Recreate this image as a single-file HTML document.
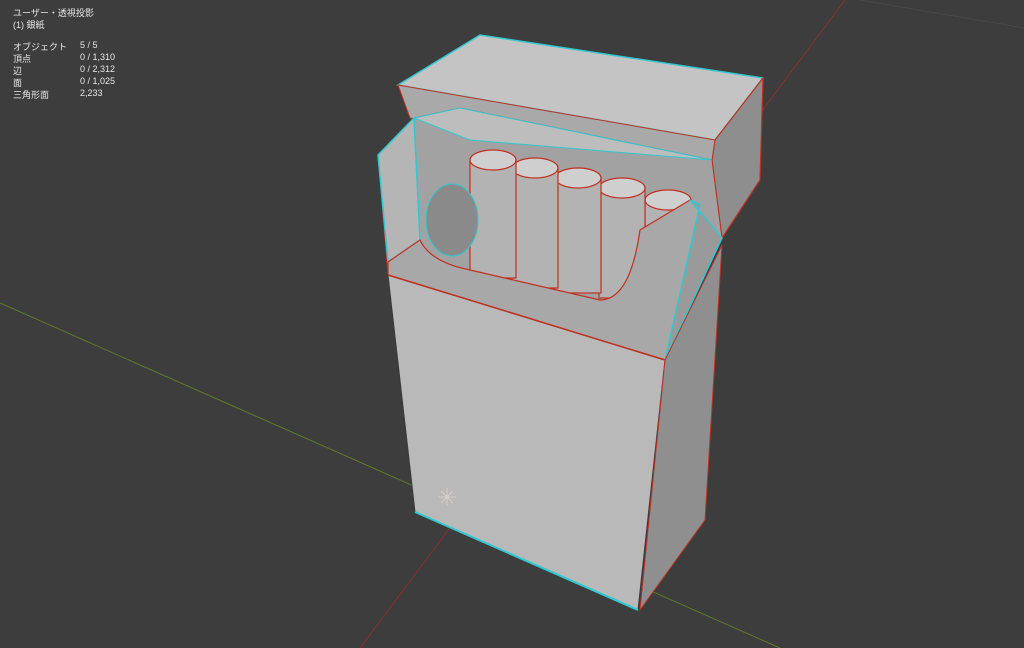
<!DOCTYPE html>
<html><head><meta charset="utf-8"><style>
html,body{margin:0;padding:0;background:#3d3d3d;width:1024px;height:648px;overflow:hidden}
.t{position:absolute;left:13px;width:200px;white-space:nowrap;color:#e6e6e6;font:9px "Liberation Sans","Noto Sans CJK JP",sans-serif}
.v{position:absolute;left:67px;top:0;white-space:nowrap}
</style></head><body>
<svg width="1024" height="648" style="position:absolute;left:0;top:0">
<rect width="1024" height="648" fill="#3d3d3d"/>
<line x1="0" y1="303" x2="780" y2="648" stroke="#5f7a2a" stroke-width="1"/>
<line x1="845" y1="0" x2="360" y2="648" stroke="#8a3030" stroke-width="1"/>
<line x1="860" y1="0" x2="1024" y2="28" stroke="#4a4a4a" stroke-width="1"/>
<polygon points="398,85 480,35 763,78 715,140" fill="#c4c4c4" stroke="#30c8d0" stroke-width="1.5"/>
<polygon points="715,140 763,78 760,180 722,238 712,160" fill="#8e8e8e" stroke="#c03020" stroke-width="1.2"/>
<polygon points="398,85 715,140 712,160 410,118" fill="#a9a9a9" stroke="#c03020" stroke-width="1"/>
<polygon points="378,155 414,118 460,108 712,160 722,238 665,360 388,275" fill="#a2a2a2" stroke="#c03020" stroke-width="1"/>
<polygon points="414,118 460,108 712,160 470,140" fill="#bdbdbd" stroke="#30c8d0" stroke-width="1"/>
<polygon points="378,155 414,118 420,240 388,262" fill="#b5b5b5" stroke="#30c8d0" stroke-width="1.5"/>
<g fill="#b3b3b3" stroke="#c03020" stroke-width="1.2">
<rect x="645" y="200" width="46" height="90"/><ellipse cx="668" cy="200" rx="23" ry="10" fill="#cfcfcf"/>
<rect x="599" y="188" width="46" height="110"/><ellipse cx="622" cy="188" rx="23" ry="10" fill="#cfcfcf"/>
<rect x="555" y="178" width="46" height="115"/><ellipse cx="578" cy="178" rx="23" ry="10" fill="#cfcfcf"/>
<rect x="512" y="168" width="46" height="120"/><ellipse cx="535" cy="168" rx="23" ry="10" fill="#cfcfcf"/>
<rect x="470" y="160" width="46" height="118"/><ellipse cx="493" cy="160" rx="23" ry="10" fill="#cfcfcf"/>
</g>
<ellipse cx="452" cy="220" rx="26" ry="36" fill="#8a8a8a" stroke="#30c8d0"/>
<path d="M388,262 L420,240 Q430,262 470,270 L600,300 Q630,300 640,230 L690,200 L722,238 L665,360 L388,275 Z" fill="#a8a8a8" stroke="#c03020" stroke-width="1.2"/>
<polygon points="665,360 722,238 690,200 700,205" fill="#9a9a9a" stroke="#30c8d0" stroke-width="1.5"/>
<polygon points="388,275 665,360 638,610 415,512" fill="#b9b9b9" stroke="#3a3a3a" stroke-width="1"/>
<polygon points="665,360 722,245 705,520 640,610" fill="#8f8f8f" stroke="#c03020" stroke-width="1"/>
<line x1="415" y1="512" x2="638" y2="610" stroke="#30c8d0" stroke-width="2"/>
<line x1="388" y1="275" x2="665" y2="360" stroke="#c03020" stroke-width="1.5"/>
<g stroke="#d9d0d0" stroke-width="1"><line x1="438" y1="497" x2="456" y2="497"/><line x1="447" y1="488" x2="447" y2="506"/><line x1="441" y1="491" x2="453" y2="503"/><line x1="453" y1="491" x2="441" y2="503"/></g>
</svg>
<div class="t" style="top:6px">ユーザー・透視投影</div>
<div class="t" style="top:18px">(1) 銀紙</div>
<div class="t" style="top:40px">オブジェクト<span class="v">5 / 5</span></div>
<div class="t" style="top:52px">頂点<span class="v">0 / 1,310</span></div>
<div class="t" style="top:64px">辺<span class="v">0 / 2,312</span></div>
<div class="t" style="top:76px">面<span class="v">0 / 1,025</span></div>
<div class="t" style="top:88px">三角形面<span class="v">2,233</span></div>
</body></html>
